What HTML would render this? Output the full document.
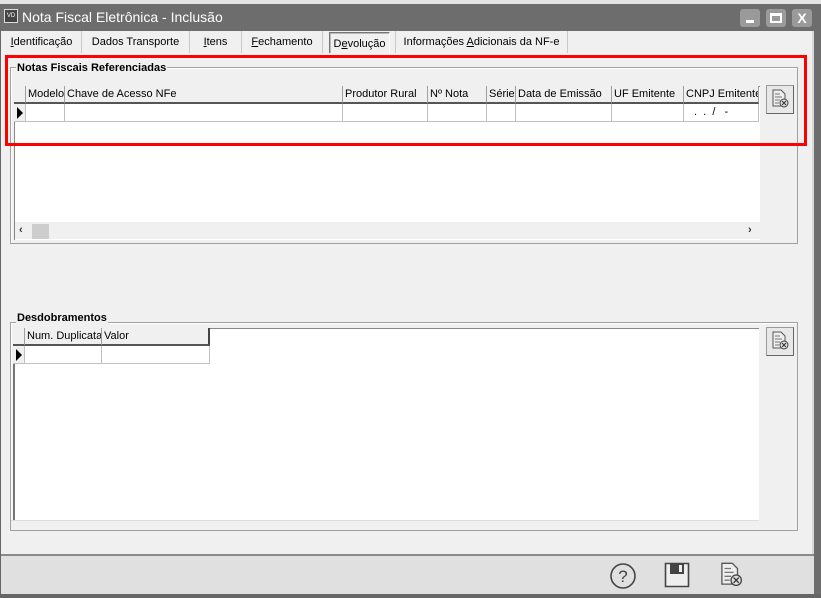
<!DOCTYPE html>
<html><head><meta charset="utf-8"><style>
*{box-sizing:border-box;margin:0;padding:0}
body{width:821px;height:598px;position:relative;background:#f0f0f0;font-family:"Liberation Sans",sans-serif;font-size:11px;color:#000;overflow:hidden}
.a{position:absolute}
.tab{position:absolute;top:31px;height:22px;border-right:1px solid #c8c8c8;padding-top:5px;text-align:center;font-size:11px}
.grp{position:absolute;border:1px solid #a0a0a0;box-shadow:inset 1px 1px 0 #fff}
.gt{position:absolute;font-weight:bold;background:#f0f0f0;padding:0 1px}
.hd{position:absolute;background:#f0f0f0;border-right:1px solid #a0a0a0;border-bottom:2px solid #555;height:18px;padding:2px 2px;font-size:11px;white-space:nowrap;overflow:hidden}
.cl{position:absolute;border-right:1px solid #c0c0c0;border-bottom:1px solid #c0c0c0;height:18px;background:#fff}
.btn{position:absolute;width:28px;height:29px;background:#e8e8e8;border:1px solid #9a9a9a;border-right-color:#666;border-bottom-color:#666}
u{text-decoration:underline}
</style></head><body>
<div class="a" style="left:0;top:0;width:821px;height:4px;background:#e4e4e4"></div>
<div class="a" style="left:0;top:4px;width:821px;height:27px;background:#6d6d6d"></div>
<div class="a" style="left:4px;top:9px;width:14px;height:14px;background:#444;border:1px solid #ddd;color:#fff;font-size:6px;line-height:12px;text-align:center">VD</div>
<div class="a" style="left:22px;top:9px;color:#fff;font-size:14px">Nota Fiscal Eletrônica - Inclusão</div>
<div class="a" style="left:740px;top:9px;width:20px;height:18px;background:#9a9a9a;border-radius:3px"><div class="a" style="left:6px;top:11px;width:8px;height:3px;background:#fff"></div></div>
<div class="a" style="left:766px;top:9px;width:20px;height:18px;background:#9a9a9a;border-radius:3px"><div class="a" style="left:4px;top:4px;width:12px;height:10px;border:2px solid #fff;border-top-width:3px"></div></div>
<div class="a" style="left:792px;top:9px;width:20px;height:18px;background:#9a9a9a;border-radius:3px;color:#fff;font-weight:bold;font-size:14px;text-align:center;line-height:18px">X</div>
<div class="a" style="left:0;top:31px;width:1px;height:567px;background:#666"></div>
<div class="a" style="left:814px;top:31px;width:7px;height:567px;background:#6d6d6d"></div>
<div class="a" style="left:812px;top:31px;width:2px;height:524px;background:#d8d8d8"></div>

<div class="tab" style="left:2px;width:80px"><u>I</u>dentificação</div>
<div class="tab" style="left:82px;width:108px">Dados Transporte</div>
<div class="tab" style="left:190px;width:52px"><u>I</u>tens</div>
<div class="tab" style="left:242px;width:81px"><u>F</u>echamento</div>
<div class="a" style="left:329px;top:32px;width:61px;height:21px;border:1px solid #777;border-right-color:#fff;border-bottom:none;background:#f0f0f0;padding-top:5px;text-align:center;box-shadow:inset 1px 1px 0 #bbb">D<u>e</u>volução</div>
<div class="tab" style="left:395px;width:173px;border-left:1px solid #c8c8c8">Informações <u>A</u>dicionais da NF-e</div>

<div class="grp" style="left:10px;top:67px;width:788px;height:177px"></div>
<div class="gt" style="left:16px;top:62px">Notas Fiscais Referenciadas</div>
<div class="a" style="left:14px;top:86px;width:746px;height:154px;background:#fff;border-left:1px solid #888;border-top:1px solid #888"></div>
<div class="hd" style="left:14px;top:86px;width:12px"></div>
<div class="hd" style="left:26px;top:86px;width:39px">Modelo</div>
<div class="hd" style="left:65px;top:86px;width:278px">Chave de Acesso NFe</div>
<div class="hd" style="left:343px;top:86px;width:85px">Produtor Rural</div>
<div class="hd" style="left:428px;top:86px;width:59px">Nº Nota</div>
<div class="hd" style="left:487px;top:86px;width:29px">Série</div>
<div class="hd" style="left:516px;top:86px;width:96px">Data de Emissão</div>
<div class="hd" style="left:612px;top:86px;width:72px">UF Emitente</div>
<div class="hd" style="left:684px;top:86px;width:75px">CNPJ Emitente</div>
<div class="cl" style="left:14px;top:104px;width:12px;background:#f0f0f0"></div>
<div class="a" style="left:17px;top:107px;width:0;height:0;border-top:6px solid transparent;border-bottom:6px solid transparent;border-left:6px solid #000"></div>
<div class="cl" style="left:26px;top:104px;width:39px"></div>
<div class="cl" style="left:65px;top:104px;width:278px"></div>
<div class="cl" style="left:343px;top:104px;width:85px"></div>
<div class="cl" style="left:428px;top:104px;width:59px"></div>
<div class="cl" style="left:487px;top:104px;width:29px"></div>
<div class="cl" style="left:516px;top:104px;width:96px"></div>
<div class="cl" style="left:612px;top:104px;width:72px"></div>
<div class="cl" style="left:684px;top:104px;width:75px;padding:2px 0 0 10px;font-size:11px">. &nbsp;. &nbsp;/ &nbsp; -</div>
<div class="a" style="left:15px;top:222px;width:745px;height:17px;background:#f0f0f0"></div>
<div class="a" style="left:19px;top:224px;font-size:11px;font-weight:bold;color:#333">&lsaquo;</div>
<div class="a" style="left:32px;top:224px;width:17px;height:15px;background:#cdcdcd"></div>
<div class="a" style="left:748px;top:224px;font-size:11px;font-weight:bold;color:#333">&rsaquo;</div>

<div class="a" style="left:5px;top:55px;width:802px;height:91px;border:3px solid #f00"></div>

<div class="btn" style="left:766px;top:85px"></div>
<svg class="a" style="left:770px;top:89px" width="20" height="20" viewBox="0 0 20 20"><path d="M3 1h8l4 4v12H3z" fill="#eee" stroke="#555"/><path d="M5 5h5M5 8h7M5 11h5M5 14h4" stroke="#777"/><circle cx="14" cy="14" r="4" fill="#ddd" stroke="#444"/><path d="M12 12l4 4M16 12l-4 4" stroke="#333"/></svg>

<div class="grp" style="left:10px;top:322px;width:788px;height:209px"></div>
<div class="gt" style="left:16px;top:312px">Desdobramentos</div>
<div class="a" style="left:13px;top:328px;width:746px;height:192px;background:#fff;border-left:2px solid #777;border-top:1px solid #888"></div>
<div class="a" style="left:11px;top:520px;width:748px;height:10px;background:#f0f0f0;border-top:1px solid #ddd"></div>
<div class="hd" style="left:13px;top:328px;width:12px"></div>
<div class="hd" style="left:25px;top:328px;width:77px">Num. Duplicata</div>
<div class="hd" style="left:102px;top:328px;width:108px;border-right:2px solid #444">Valor</div>
<div class="cl" style="left:13px;top:346px;width:12px;background:#f0f0f0"></div>
<div class="a" style="left:16px;top:349px;width:0;height:0;border-top:6px solid transparent;border-bottom:6px solid transparent;border-left:6px solid #000"></div>
<div class="cl" style="left:25px;top:346px;width:77px"></div>
<div class="cl" style="left:102px;top:346px;width:108px"></div>
<div class="btn" style="left:766px;top:327px"></div>
<svg class="a" style="left:770px;top:331px" width="20" height="20" viewBox="0 0 20 20"><path d="M3 1h8l4 4v12H3z" fill="#eee" stroke="#555"/><path d="M5 5h5M5 8h7M5 11h5M5 14h4" stroke="#777"/><circle cx="14" cy="14" r="4" fill="#ddd" stroke="#444"/><path d="M12 12l4 4M16 12l-4 4" stroke="#333"/></svg>

<div class="a" style="left:1px;top:554px;width:813px;height:2px;background:#8a8a8a"></div>
<div class="a" style="left:1px;top:556px;width:813px;height:38px;background:#e0e0e0"></div>
<div class="a" style="left:0;top:594px;width:821px;height:4px;background:#666"></div>
<svg class="a" style="left:609px;top:562px" width="28" height="28" viewBox="0 0 28 28"><circle cx="14" cy="14" r="12" fill="none" stroke="#444" stroke-width="1.6"/><text x="14" y="20" text-anchor="middle" font-family="Liberation Sans" font-size="17" fill="#444">?</text></svg>
<svg class="a" style="left:664px;top:562px" width="26" height="26" viewBox="0 0 26 26"><path d="M1.5 1.5h23v23h-23z" fill="#eee" stroke="#444" stroke-width="1.6"/><rect x="6" y="2" width="14" height="10" fill="#444"/><rect x="15" y="3" width="3" height="7" fill="#eee"/></svg>
<svg class="a" style="left:718px;top:562px" width="26" height="26" viewBox="0 0 20 20"><path d="M3 1h8l4 4v12H3z" fill="#eee" stroke="#555"/><path d="M5 5h5M5 8h7M5 11h5M5 14h4" stroke="#777"/><circle cx="14" cy="14" r="4" fill="#ddd" stroke="#444"/><path d="M12 12l4 4M16 12l-4 4" stroke="#333"/></svg>
</body></html>
